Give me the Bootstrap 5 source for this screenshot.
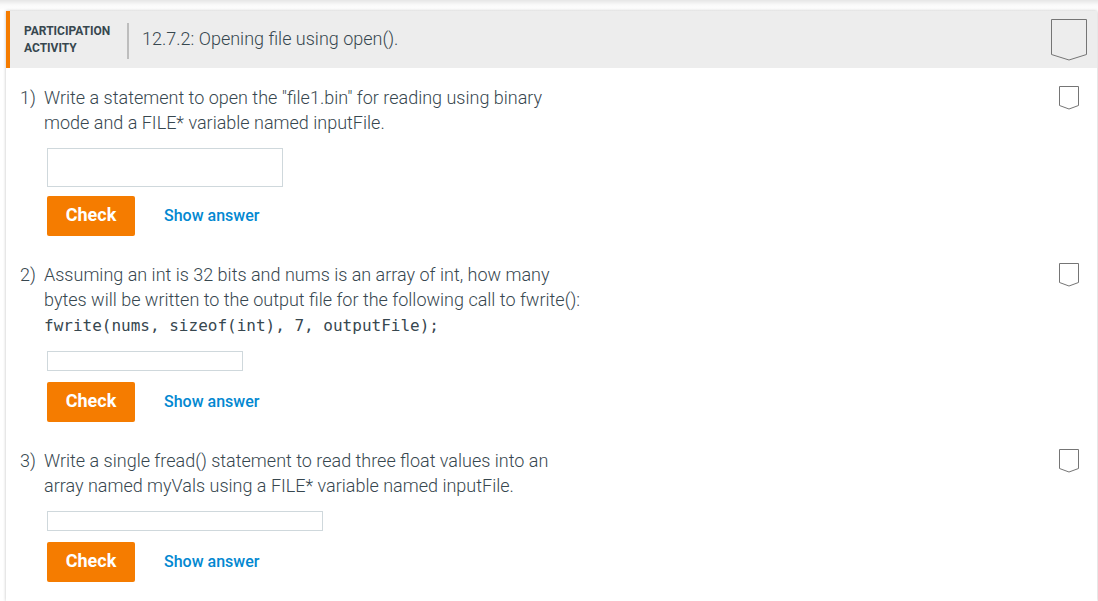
<!DOCTYPE html>
<html lang="en">
<head>
<meta charset="utf-8">
<meta name="viewport" content="width=device-width, initial-scale=1">
<title>12.7.2: Opening file using open().</title>
<link href="https://cdn.jsdelivr.net/npm/bootstrap@5.3.0/dist/css/bootstrap.min.css" rel="stylesheet">
<style>
  body { font-family: Roboto, "Liberation Sans", sans-serif; color: #37474f; background: #fff; }
  .top-shade { height: 11px; background: linear-gradient(#e6e6e6, #fafafa 5px, #fff); }
  .activity { margin: 0 1px 0 6px; box-shadow: 0 0 3px rgba(0, 0, 0, .25); background: #fff; min-height: calc(100vh - 11px); }
  .activity-head { background: #ededed; border-left: 4px solid #f57c00; min-height: 57px; padding: 8px 9px 6px 14px; }
  .kind { font-size: 12px; line-height: 17px; font-weight: 700; width: 105px; padding: 0 0 2px; border-right: 2px solid #bdbdbd; }
  .activity-title { font-size: 18px; line-height: 25px; font-weight: 300; margin: 0 0 4px 13px; }
  .questions { padding: 17px 17px 19px 14px; gap: 26px; }
  .number { width: 24px; }
  .number, .prompt { font-size: 18px; line-height: 25px; font-weight: 300; }
  .prompt { margin-bottom: 13px; }
  .prompt code { font-family: "DejaVu Sans Mono", monospace; font-size: 16px; font-weight: 400; color: #37474f; }
  .answer { border: 1px solid #cfd8dc; border-radius: 0; padding: 0 6px; margin: 0 0 11px 3px; height: 20px; min-height: 0; resize: none; font-size: 14px; }
  textarea.answer { height: 39px; min-height: 0; margin-bottom: 9px; }
  .w-area { width: 236px; } .w-short { width: 196px; } .w-long { width: 276px; }
  .actions { margin-left: 3px; gap: 29px; }
  .check { background: #f57c00; color: #fff; width: 88px; height: 40px; border: 0; border-radius: 2px; padding: 0 0 3px; font-size: 18px; line-height: 25px; font-weight: 700; }
  .check:hover { background: #e06f00; color: #fff; }
  .reveal, .reveal:hover { color: #0288d1; font-size: 16px; line-height: 24px; font-weight: 500; border: 0; padding: 0; }
  .mark-icon { fill: none; stroke: #757575; display: block; flex: none; }
  .question-mark { margin-top: 1px; }
</style>
</head>
<body>
<div class="top-shade"></div>
<main class="activity">
  <header class="activity-head d-flex align-items-center justify-content-between">
    <div class="d-flex align-items-center">
      <div class="kind">PARTICIPATION<br>ACTIVITY</div>
      <h1 class="activity-title">12.7.2: Opening file using open().</h1>
    </div>
    <svg class="mark-icon" width="37" height="43" viewBox="0 0 37 43" role="img" aria-label="Activity not completed"><path d="M.5.5h35v35l-17.5 5.500-17.500-5.500z"/></svg>
  </header>
  <div class="questions d-flex flex-column">
    <section class="d-flex align-items-start">
      <div class="number flex-shrink-0">1)</div>
      <div class="flex-grow-1">
        <label class="prompt d-block" for="a1">Write a statement to open the "file1.bin" for reading using binary<br>mode and a FILE* variable named inputFile.</label>
        <textarea id="a1" class="form-control answer w-area"></textarea>
        <div class="actions d-flex align-items-center">
          <button type="button" class="btn check">Check</button>
          <button type="button" class="btn reveal">Show answer</button>
        </div>
      </div>
      <svg class="mark-icon question-mark" width="21" height="24" viewBox="0 0 21 24" role="img" aria-label="Question not completed"><path d="M.5.5h19v19l-9.500 3.500-9.500-3.500z"/></svg>
    </section>
    <section class="d-flex align-items-start">
      <div class="number flex-shrink-0">2)</div>
      <div class="flex-grow-1">
        <label class="prompt d-block" for="a2">Assuming an int is 32 bits and nums is an array of int, how many<br>bytes will be written to the output file for the following call to fwrite():<br><code>fwrite(nums, sizeof(int), 7, outputFile);</code></label>
        <input type="text" id="a2" class="form-control answer w-short">
        <div class="actions d-flex align-items-center">
          <button type="button" class="btn check">Check</button>
          <button type="button" class="btn reveal">Show answer</button>
        </div>
      </div>
      <svg class="mark-icon question-mark" width="21" height="24" viewBox="0 0 21 24" role="img" aria-label="Question not completed"><path d="M.5.5h19v19l-9.500 3.500-9.500-3.500z"/></svg>
    </section>
    <section class="d-flex align-items-start">
      <div class="number flex-shrink-0">3)</div>
      <div class="flex-grow-1">
        <label class="prompt d-block" for="a3">Write a single fread() statement to read three float values into an<br>array named myVals using a FILE* variable named inputFile.</label>
        <input type="text" id="a3" class="form-control answer w-long">
        <div class="actions d-flex align-items-center">
          <button type="button" class="btn check">Check</button>
          <button type="button" class="btn reveal">Show answer</button>
        </div>
      </div>
      <svg class="mark-icon question-mark" width="21" height="24" viewBox="0 0 21 24" role="img" aria-label="Question not completed"><path d="M.5.5h19v19l-9.500 3.500-9.500-3.500z"/></svg>
    </section>
  </div>
</main>
<script src="https://cdn.jsdelivr.net/npm/bootstrap@5.3.0/dist/js/bootstrap.bundle.min.js"></script>
</body>
</html>
